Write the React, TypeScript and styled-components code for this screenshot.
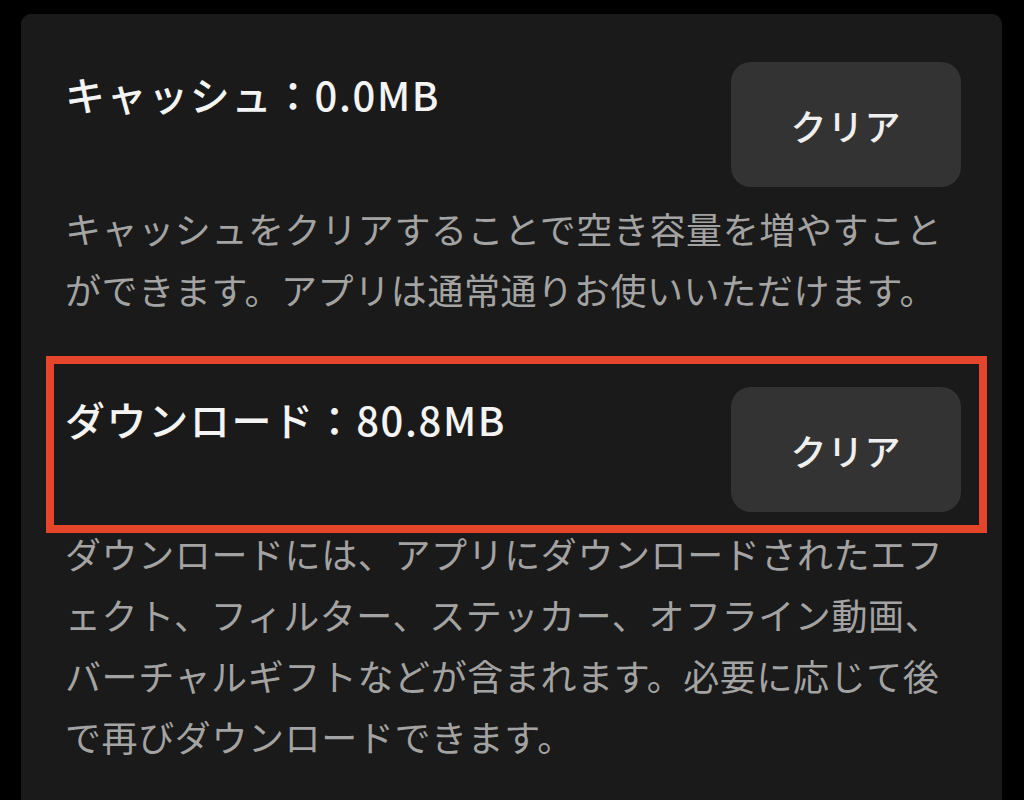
import React from 'react';
import styled, { createGlobalStyle } from 'styled-components';

const GlobalStyle = createGlobalStyle`
  html, body {
    margin: 0;
    padding: 0;
    background: #000;
  }
  body {
    font-family: 'Noto Sans CJK JP', 'Noto Sans', sans-serif;
    overflow: hidden;
  }
`;

const Page = styled.div`
  padding: 14px 22px 0 21px;
  height: 800px;
  box-sizing: border-box;
`;

const Card = styled.div`
  background: #1a1a1a;
  border-radius: 10px 10px 0 0;
  min-height: 820px;
  padding: 48px 41px 0 44px;
  box-sizing: border-box;
`;

const Section = styled.section<{ $gap?: number }>`
  margin-top: ${(p) => p.$gap ?? 0}px;
`;

const Row = styled.div`
  position: relative;
  display: flex;
  justify-content: space-between;
  align-items: flex-start;
`;

const Title = styled.h2`
  margin: 0;
  padding-top: 8px;
  font-size: 40px;
  line-height: 48px;
  font-weight: 500;
  letter-spacing: 1.6px;
  color: #f4f4f4;
`;

const ClearButton = styled.button`
  width: 230px;
  height: 125px;
  border: none;
  border-radius: 20px;
  background: #333333;
  color: #efefef;
  font-family: inherit;
  font-size: 36px;
  font-weight: 500;
  letter-spacing: 1px;
  flex-shrink: 0;
`;

const Description = styled.p`
  margin: 11px 0 0;
  font-size: 36px;
  line-height: 61px;
  letter-spacing: 0.6px;
  color: #a3a3a3;
  white-space: nowrap;
`;

const Highlight = styled.div`
  position: absolute;
  top: -31px;
  bottom: -21px;
  left: -19px;
  right: -26px;
  border: 8px solid #e5452b;
  pointer-events: none;
`;

function StorageItem(props: {
  label: string;
  size: string;
  lines: string[];
  highlighted?: boolean;
  gap?: number;
}) {
  return (
    <Section $gap={props.gap}>
      <Row>
        <Title>
          {props.label}：{props.size}
        </Title>
        <ClearButton>クリア</ClearButton>
        {props.highlighted ? <Highlight /> : null}
      </Row>
      <Description>
        {props.lines.map((line, i) => (
          <React.Fragment key={i}>
            {line}
            {i < props.lines.length - 1 ? <br /> : null}
          </React.Fragment>
        ))}
      </Description>
    </Section>
  );
}

export default function App() {
  return (
    <>
      <GlobalStyle />
      <Page>
        <Card>
          <StorageItem
            label="キャッシュ"
            size="0.0MB"
            lines={[
              'キャッシュをクリアすることで空き容量を増やすこと',
              'ができます。アプリは通常通りお使いいただけます。',
            ]}
          />
          <StorageItem
            label="ダウンロード"
            size="80.8MB"
            gap={67}
            highlighted
            lines={[
              'ダウンロードには、アプリにダウンロードされたエフ',
              'ェクト、フィルター、ステッカー、オフライン動画、',
              'バーチャルギフトなどが含まれます。必要に応じて後',
              'で再びダウンロードできます。',
            ]}
          />
        </Card>
      </Page>
    </>
  );
}
